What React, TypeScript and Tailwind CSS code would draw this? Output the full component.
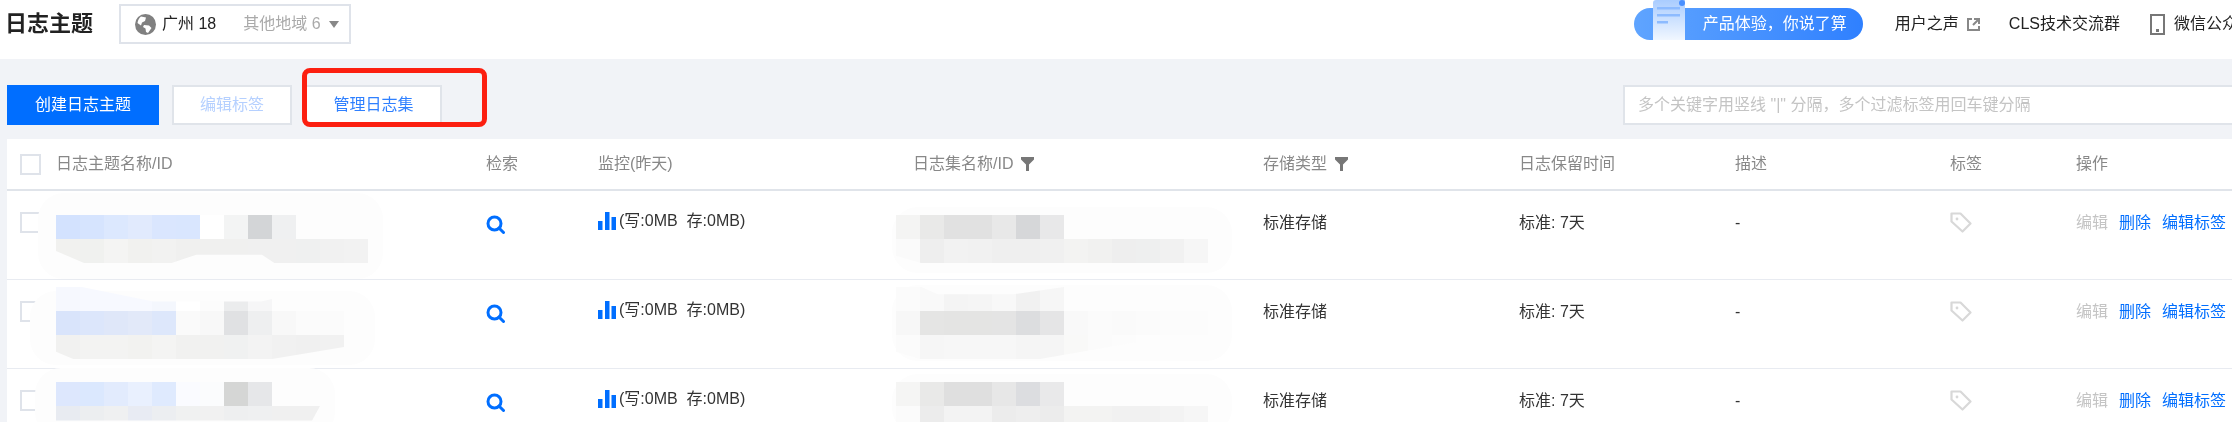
import React from 'react';

const FONT = "font-['Liberation_Sans','Noto_Sans_CJK_SC',sans-serif]";

function FilterIcon() {
  return (
    <svg width="13" height="14" viewBox="0 0 13 14" className="shrink-0">
      <path d="M0 0h13v2.5L8 7.5V14H5V7.5L0 2.5z" fill="#777" />
    </svg>
  );
}

function SearchIcon() {
  return (
    <svg width="19" height="19" viewBox="0 0 19 19" fill="none" stroke="#006eff" strokeWidth="3">
      <circle cx="8.5" cy="8.5" r="6.5" />
      <path d="M13 13l4.5 4.5" strokeLinecap="round" />
    </svg>
  );
}

function BarsIcon() {
  return (
    <svg width="18" height="18" viewBox="0 0 18 18" fill="#006eff" className="shrink-0">
      <rect x="0" y="9" width="4.5" height="9" />
      <rect x="7" y="0" width="4.5" height="18" />
      <rect x="13.5" y="5" width="4.5" height="13" />
    </svg>
  );
}

function TagIcon() {
  return (
    <svg width="22" height="21" viewBox="0 0 22 21" fill="none" stroke="#d8d8d8" strokeWidth="2.2">
      <path d="M1.5 1.5h9l10 10-8 8-11-10z" strokeLinejoin="round" />
      <circle cx="7" cy="7" r="1.4" fill="#d8d8d8" stroke="none" />
    </svg>
  );
}

function GlobeIcon() {
  return (
    <svg width="21" height="21" viewBox="0 0 21 21" className="shrink-0">
      <circle cx="10.5" cy="10.5" r="10.5" fill="#808080" />
      <path d="M6 2.5l5 1-1 3.5-3 1.5-1 3-3.5-2.5C3 6 4 4 6 2.5z" fill="#fff" />
      <path d="M9 11l5 .5 2.5 2.5-3.5 5-2-1-.5-3.5L8 13z" fill="#fff" />
    </svg>
  );
}

function OpenIcon() {
  return (
    <svg width="13" height="13" viewBox="0 0 13 13" fill="none" stroke="#888" strokeWidth="2" className="shrink-0">
      <path d="M5 1H1v11h11V8" />
      <path d="M7 1h5v5M12 1L6 7" />
    </svg>
  );
}

function PhoneIcon() {
  return (
    <svg width="15" height="21" viewBox="0 0 15 21" fill="none" className="shrink-0">
      <rect x="1" y="1" width="13" height="19" stroke="#777" strokeWidth="2" />
      <rect x="6" y="15" width="3" height="3" fill="#777" />
    </svg>
  );
}

function PaperIcon() {
  return (
    <svg width="32" height="40" viewBox="0 0 32 40" className="absolute left-[19px] top-[-8px]">
      <defs>
        <linearGradient id="paper" x1="0" y1="0" x2="0" y2="1">
          <stop offset="0" stopColor="#a9ccff" />
          <stop offset="1" stopColor="#f1f7ff" />
        </linearGradient>
      </defs>
      <path d="M3 0h29v40H0V3a3 3 0 0 1 3-3z" fill="url(#paper)" />
      <circle cx="29" cy="3" r="3" fill="#4a90ff" />
      <rect x="4" y="7" width="23" height="2.5" fill="#8dbbff" />
      <rect x="4" y="14" width="23" height="2.5" fill="#8dbbff" />
      <rect x="4" y="21" width="11" height="2.5" fill="#8dbbff" />
    </svg>
  );
}

type MosaicLine = { cells: string[]; clip?: string };

function Mosaic({ lines, smear, top }: { lines: MosaicLine[]; smear: string; top: string }) {
  return (
    <div className={`relative ${top}`}>
      <div className={`absolute bg-[#fdfdfd] rounded-[26px] ${smear}`} />
      {lines.map((line, i) => (
        <div key={i} className={`relative flex h-6 w-max ${line.clip ?? ''}`}>
          {line.cells.map((c, j) => (
            <div key={j} className="w-6 h-6" style={{ backgroundColor: c }} />
          ))}
        </div>
      ))}
    </div>
  );
}

const rows = [
  {
    name: (
      <Mosaic
        top="mt-6"
        smear="-left-[18px] -top-[22px] w-[345px] h-[86px]"
        lines={[
          { cells: ['#d3e2fe', '#d6e4fe', '#dce8fe', '#e1eafd', '#dae6fe', '#d9e6fe', '#ffffff', '#f3f4f4', '#d3d5d7', '#eff0f1'] },
          {
            cells: ['#f1f1ef', '#f0f1ef', '#f4f4f3', '#f1f1ef', '#f2f2f1', '#f0f0ef', '#f0f0ef', '#f0f0ef', '#f0f0f0', '#f0f0f0', '#eff0f0', '#f1f1f1', '#f2f2f2'],
            clip: '[clip-path:polygon(0_0,100%_0,100%_100%,70%_100%,66%_66%,45%_66%,37%_100%,9%_100%,0_50%)]',
          },
        ]}
      />
    ),
    set: (
      <Mosaic
        top="mt-6"
        smear="-left-[4px] -top-[8px] w-[340px] h-[66px]"
        lines={[
          { cells: ['#f4f4f3', '#e9e9e8', '#e1e1e1', '#e1e1e1', '#e8e8e8', '#d6d7d9', '#e8e8e9'] },
          {
            cells: ['#fafafa', '#eeeeee', '#f2f2f2', '#f1f1f1', '#efefef', '#efefef', '#f0f0f0', '#f3f3f2', '#f1f1f0', '#eeeeee', '#eeefef', '#f1f1f1', '#f6f6f6'],
            clip: '[clip-path:polygon(0_0,100%_0,100%_100%,8%_100%,0_70%)]',
          },
        ]}
      />
    ),
  },
  {
    name: (
      <Mosaic
        top="mt-[7px]"
        smear="-left-[26px] top-[4px] w-[345px] h-[74px]"
        lines={[
          {
            cells: ['#f6f8fe', '#f7f9ff', '#f7f9ff', '#f7f9ff', '#f4f7fd', '#ffffff', '#fcfcfc', '#ebeced', '#f6f6f7'],
            clip: '[clip-path:polygon(0_0,12%_0,45%_60%,95%_60%,100%_50%,100%_100%,0_100%)]',
          },
          { cells: ['#d9e4fb', '#dce6fb', '#dfe7f9', '#e2e9f9', '#dde7fb', '#fafafa', '#f8f8f8', '#e0e1e3', '#eeeff0', '#f8f8f8', '#fbfbfb', '#fbfbfb'] },
          {
            cells: ['#f1f1f0', '#f3f3f2', '#f3f3f2', '#f2f2f0', '#f4f4f3', '#f1f1f0', '#f1f1f0', '#f0f1f1', '#f3f3f3', '#f1f1f1', '#f0f0f0', '#f1f1f1'],
            clip: '[clip-path:polygon(0_0,100%_0,100%_50%,75%_100%,6%_100%,0_70%)]',
          },
        ]}
      />
    ),
    set: (
      <Mosaic
        top="mt-[7px]"
        smear="-left-[4px] -top-[2px] w-[340px] h-[76px]"
        lines={[
          {
            cells: ['#fbfbfb', '#f9f9f9', '#f4f4f4', '#f5f5f5', '#f8f8f8', '#f1f1f1', '#f6f6f6'],
            clip: '[clip-path:polygon(0_0,15%_0,25%_30%,70%_30%,100%_0,100%_100%,0_100%)]',
          },
          { cells: ['#f7f7f7', '#e5e5e4', '#e4e4e3', '#e4e4e3', '#e4e4e4', '#dcdddf', '#e5e5e6', '#f9f9f9', '#fbfbfb', '#fafafa', '#fbfbfb', '#fcfcfc', '#fcfcfc'] },
          {
            cells: ['#fbfbfb', '#f6f6f6', '#f7f7f7', '#f7f7f7', '#f7f7f7', '#f5f5f5', '#f5f5f5', '#f9f9f8', '#fbfbfb', '#fcfcfc'],
            clip: '[clip-path:polygon(0_0,100%_0,100%_30%,60%_100%,10%_100%,0_70%)]',
          },
        ]}
      />
    ),
  },
  {
    name: (
      <Mosaic
        top="mt-[13px]"
        smear="-left-[21px] -top-[14px] w-[300px] h-[70px]"
        lines={[
          { cells: ['#dde7fd', '#dbe8fe', '#e2ebfd', '#e9f0fe', '#dfeafe', '#fafbff', '#fbfcfd', '#d5d6d5', '#e6e7e9'] },
          {
            cells: ['#e8ebf1', '#eceef0', '#eff0f1', '#e8ebf3', '#eceef1', '#f0f1f1', '#f1f1f1', '#eeeff0', '#eff0f1', '#f0f0f0', '#f0f0f0'],
            clip: '[clip-path:polygon(0_0,100%_0,97%_60%,0_60%)]',
          },
        ]}
      />
    ),
    set: (
      <Mosaic
        top="mt-[13px]"
        smear="-left-[4px] -top-[8px] w-[340px] h-[60px]"
        lines={[
          { cells: ['#f5f5f4', '#e9e9e8', '#dfdfdf', '#dfdfdf', '#e7e7e7', '#dcdde0', '#e9e9ea'] },
          { cells: ['#fbfbfb', '#ececec', '#f3f3f3', '#f3f3f3', '#ececec', '#eeeeee', '#ececec', '#f3f3f2', '#f3f3f2', '#f1f1f1', '#f1f1f1', '#f3f3f3', '#f6f6f6'] },
        ]}
      />
    ),
  },
];

const columns = 'grid grid-cols-[49px_430px_112px_315px_350px_256px_216px_215px_126px_1fr]';

export default function App() {
  return (
    <div className={`h-screen overflow-hidden bg-[#f1f3f7] text-[16px] text-[#333] blur-[0.5px] ${FONT}`}>
      {/* Header */}
      <div className="h-[59px] pb-[11px] bg-white flex items-center overflow-hidden whitespace-nowrap">
        <h1 className="ml-[5px] text-[22px] font-bold text-[#222] leading-none">日志主题</h1>
        <div className="ml-[26px] h-[40px] w-[232px] border-2 border-[#dfe3ea] flex items-center pl-[14px] shrink-0">
          <GlobeIcon />
          <span className="ml-[6px] text-[#222]">广州 18</span>
          <span className="ml-[27px] text-[#aaa]">其他地域 6</span>
          <svg width="10" height="7" viewBox="0 0 10 7" className="ml-[8px]">
            <path d="M0 0h10L5 7z" fill="#888" />
          </svg>
        </div>
        <div className="ml-auto mr-[-22px] flex items-center shrink-0">
          <div className="relative w-[229px] h-[32px] rounded-full bg-gradient-to-r from-[#5fa4ff] to-[#2f80ff] text-white pl-[69px] flex items-center">
            <PaperIcon />
            产品体验，你说了算
          </div>
          <span className="ml-8 text-[#222]">用户之声</span>
          <span className="ml-2">
            <OpenIcon />
          </span>
          <span className="ml-[29px] text-[#222]">CLS技术交流群</span>
          <span className="ml-[30px]">
            <PhoneIcon />
          </span>
          <span className="ml-[9px] text-[#222]">微信公众号</span>
        </div>
      </div>

      {/* Toolbar */}
      <div className="relative h-[80px] pt-[26px] pl-[7px] flex items-start">
        <button className="h-10 w-[152px] bg-[#006eff] text-white">创建日志主题</button>
        <button className="ml-[13px] h-10 w-[120px] bg-white border-2 border-[#e0e4ea] text-[#b5d0ff]">编辑标签</button>
        <button className="ml-[13px] h-10 w-[137px] bg-white border-2 border-[#e0e4ea] text-[#2f80ff]">管理日志集</button>
        <div className="ml-auto h-10 w-[609px] bg-white border-2 border-r-0 border-[#e0e4ea] pl-[13px] flex items-center text-[#c4c4c4] whitespace-nowrap">
          多个关键字用竖线 "|" 分隔，多个过滤标签用回车键分隔
        </div>
        <div className="absolute left-[302px] top-[9px] w-[185px] h-[59px] border-[5px] border-[#fc1f10] rounded-[8px]" />
      </div>

      {/* Table */}
      <div className="ml-[7px] bg-white">
        <div className={`${columns} h-[52px] items-center border-b-2 border-[#e0e4ea] text-[#888] whitespace-nowrap`}>
          <div className="pl-[13px]">
            <div className="w-[21px] h-[21px] border-2 border-[#dfe3ea]" />
          </div>
          <div>日志主题名称/ID</div>
          <div>检索</div>
          <div>监控(昨天)</div>
          <div className="flex items-center gap-2">
            日志集名称/ID <FilterIcon />
          </div>
          <div className="flex items-center gap-2">
            存储类型 <FilterIcon />
          </div>
          <div>日志保留时间</div>
          <div>描述</div>
          <div>标签</div>
          <div>操作</div>
        </div>
        {rows.map((row, i) => (
          <div key={i} className={`${columns} h-[89px] items-start border-b border-[#e8ebf1] whitespace-nowrap`}>
            <div className="pl-[13px] pt-[21px]">
              <div className="w-[21px] h-[21px] border-2 border-[#dfe3ea]" />
            </div>
            <div>{row.name}</div>
            <div className="pt-[24px]">
              <SearchIcon />
            </div>
            <div className="pt-[18px] flex items-center gap-[3px] h-[42px]">
              <BarsIcon />
              <span className="whitespace-pre">(写:0MB  存:0MB)</span>
            </div>
            <div className="-ml-[17px]">{row.set}</div>
            <div className="pt-5">标准存储</div>
            <div className="pt-5">标准: 7天</div>
            <div className="pt-5">-</div>
            <div className="pt-[21px]">
              <TagIcon />
            </div>
            <div className="pt-5 flex gap-[11px]">
              <span className="text-[#c4c4c4]">编辑</span>
              <span className="text-[#006eff]">删除</span>
              <span className="text-[#006eff]">编辑标签</span>
            </div>
          </div>
        ))}
      </div>
    </div>
  );
}
